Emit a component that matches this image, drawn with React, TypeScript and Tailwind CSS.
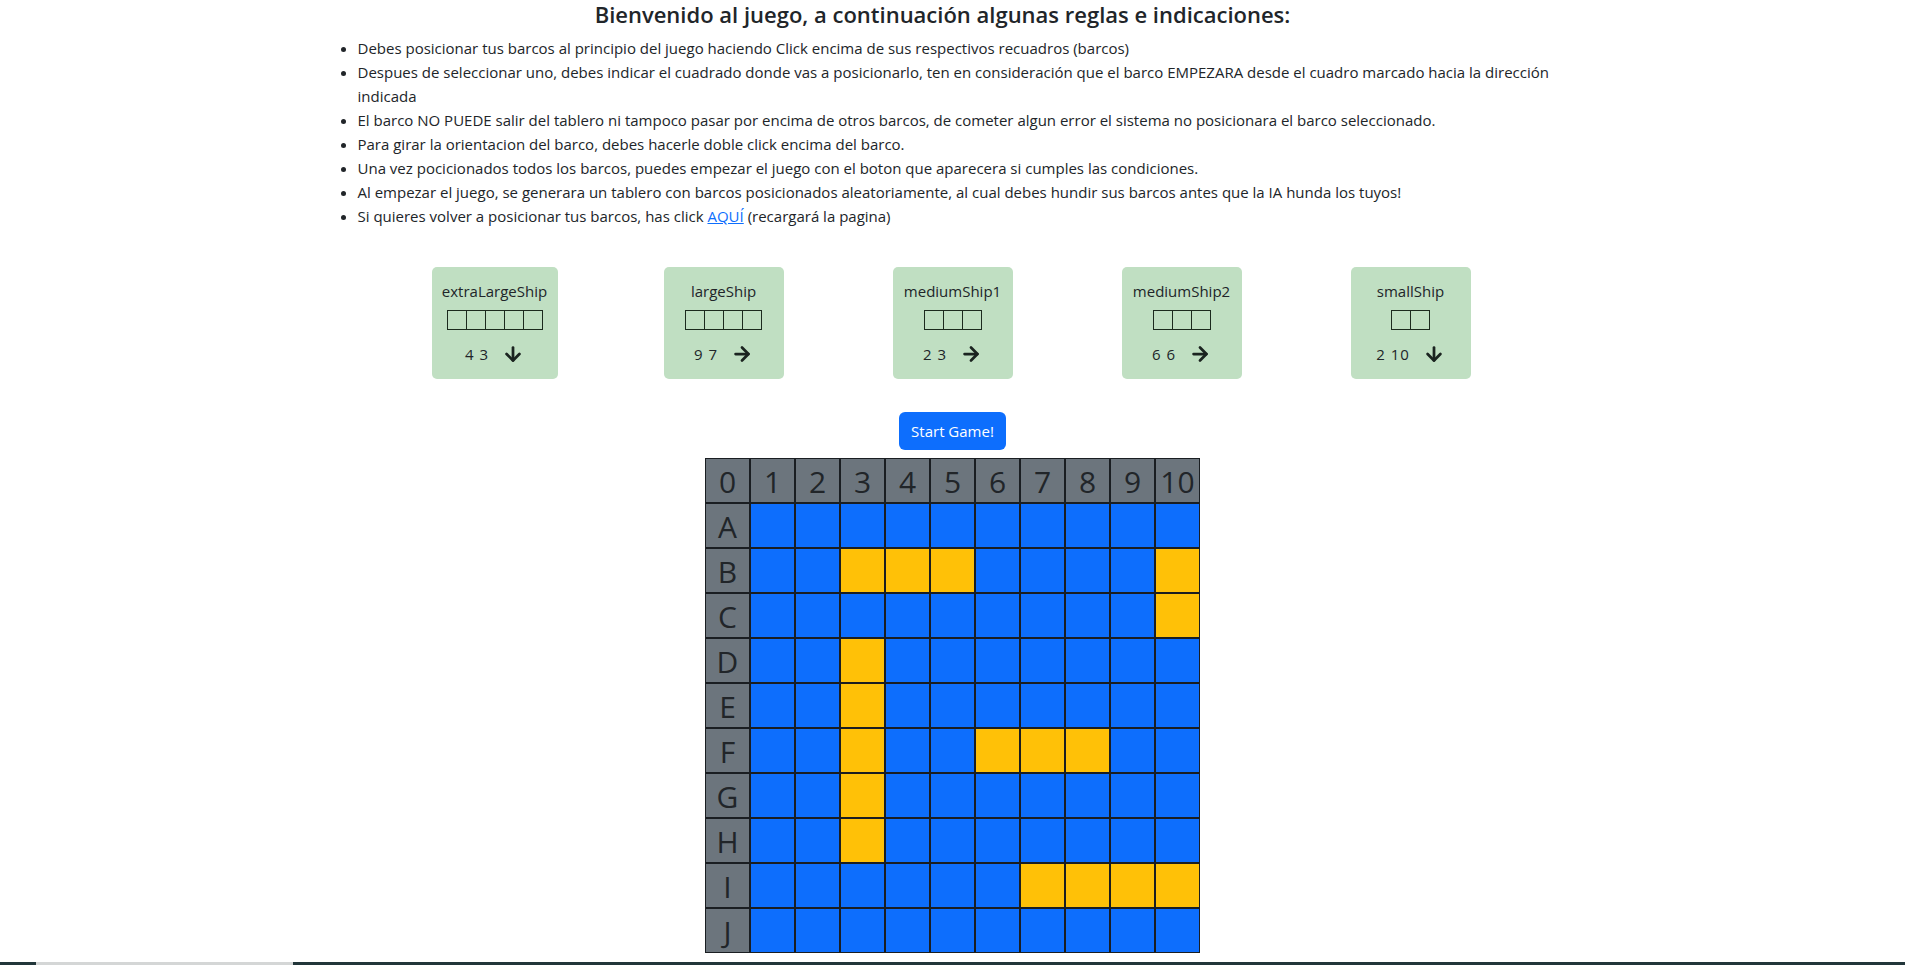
import { ArrowDown, ArrowRight } from "lucide-react";

const rules = [
  "Debes posicionar tus barcos al principio del juego haciendo Click encima de sus respectivos recuadros (barcos)",
  "Despues de seleccionar uno, debes indicar el cuadrado donde vas a posicionarlo, ten en consideración que el barco EMPEZARA desde el cuadro marcado hacia la dirección indicada",
  "El barco NO PUEDE salir del tablero ni tampoco pasar por encima de otros barcos, de cometer algun error el sistema no posicionara el barco seleccionado.",
  "Para girar la orientacion del barco, debes hacerle doble click encima del barco.",
  "Una vez pocicionados todos los barcos, puedes empezar el juego con el boton que aparecera si cumples las condiciones.",
  "Al empezar el juego, se generara un tablero con barcos posicionados aleatoriamente, al cual debes hundir sus barcos antes que la IA hunda los tuyos!",
];

const ships = [
  { name: "extraLargeShip", size: 5, row: 4, col: 3, dir: "down", width: "w-[126px]" },
  { name: "largeShip", size: 4, row: 9, col: 7, dir: "right", width: "w-[120px]" },
  { name: "mediumShip1", size: 3, row: 2, col: 3, dir: "right", width: "w-[120px]" },
  { name: "mediumShip2", size: 3, row: 6, col: 6, dir: "right", width: "w-[120px]" },
  { name: "smallShip", size: 2, row: 2, col: 10, dir: "down", width: "w-[120px]" },
];

const letters = ["A", "B", "C", "D", "E", "F", "G", "H", "I", "J"];

// which cells are taken, from the ship list
function buildBoard() {
  const board = letters.map(() => Array(10).fill(false));
  ships.forEach((s) => {
    for (let i = 0; i < s.size; i++) {
      const r = s.row - 1 + (s.dir === "down" ? i : 0);
      const c = s.col - 1 + (s.dir === "right" ? i : 0);
      board[r][c] = true;
    }
  });
  return board;
}

export default function App() {
  const board = buildBoard();

  return (
    <div
      className="min-h-[965px] flex flex-col bg-white text-[#212529]"
      style={{ fontFamily: '"Open Sans", "Noto Sans", sans-serif' }}
    >
      <div className="w-[1296px] mx-auto">
        <h4 className="text-center text-[22px] font-semibold leading-[29px] mb-[7px] pr-5">
          Bienvenido al juego, a continuación algunas reglas e indicaciones:
        </h4>
        <ul className="list-disc pl-[53px] text-[15px] leading-6">
          {rules.map((r, i) => (
            <li key={i}>{r}</li>
          ))}
          <li>
            Si quieres volver a posicionar tus barcos, has click{" "}
            <a href="#" className="text-[#0d6efd] underline">
              AQUÍ
            </a>{" "}
            (recargará la pagina)
          </li>
        </ul>
      </div>

      <div className="grid grid-cols-5 w-[1145px] mx-auto mt-[39px]">
        {ships.map((s) => (
          <div
            key={s.name}
            className={`${s.width} justify-self-center bg-[#c0dfc2] rounded-[5px] pt-3 pb-[13px] flex flex-col items-center`}
          >
            <div className="text-[15px] leading-6">{s.name}</div>
            <div className="flex mt-[7px]">
              {Array.from({ length: s.size }).map((_, i) => (
                <div key={i} className="w-[20px] h-[20px] border border-[#1c2a1e] -ml-px first:ml-0" />
              ))}
            </div>
            <div className="flex items-center mt-[12px] h-6 text-[15px]">
              <span className="tracking-[1px]">
                {s.row} {s.col}
              </span>
              <span className="ml-[13px] flex items-center">
                {s.dir === "down" ? (
                  <ArrowDown size={22} strokeWidth={3} color="#1b2420" />
                ) : (
                  <ArrowRight size={22} strokeWidth={3} color="#1b2420" />
                )}
              </span>
            </div>
          </div>
        ))}
      </div>

      <div className="flex justify-center mt-[33px]">
        <button className="bg-[#0d6efd] text-white rounded-[6px] px-3 py-[7px] text-[15px] leading-6">
          Start Game!
        </button>
      </div>

      <div className="mx-auto mt-2 grid grid-cols-[repeat(11,45px)]">
        {["0", "1", "2", "3", "4", "5", "6", "7", "8", "9", "10"].map((h) => (
          <div
            key={h}
            className="h-[45px] border border-[#1a1e22] bg-[#6c757d] flex items-center justify-center text-[30px] font-normal leading-none pt-[3px]"
          >
            {h}
          </div>
        ))}
        {letters.map((l, r) => [
          <div
            key={l}
            className="h-[45px] border border-[#1a1e22] bg-[#6c757d] flex items-center justify-center text-[30px] font-normal leading-none pt-[3px]"
          >
            {l}
          </div>,
          ...board[r].map((taken, c) => (
            <div
              key={l + c}
              className={`h-[45px] border border-[#1a1e22] ${taken ? "bg-[#ffc107]" : "bg-[#0d6efd]"}`}
            />
          )),
        ])}
      </div>

      <div className="mt-auto h-[3px] flex">
        <div className="w-[36px] bg-[#22363a]" />
        <div className="w-[257px] bg-[#d4d6d6]" />
        <div className="flex-1 bg-[#22363a]" />
      </div>
    </div>
  );
}
